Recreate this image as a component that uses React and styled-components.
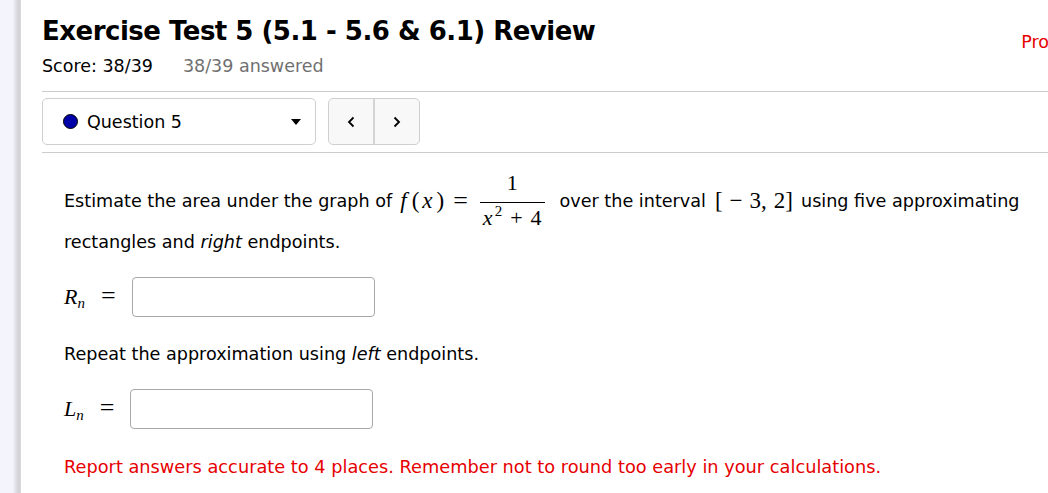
import styled, { createGlobalStyle } from "styled-components";

const GlobalStyle = createGlobalStyle`
  html, body {
    margin: 0;
    padding: 0;
    background: #fff;
    overflow: hidden;
  }
  body {
    font-family: "DejaVu Sans", "Liberation Sans", sans-serif;
    color: #000;
  }
`;

const Page = styled.div`
  display: flex;
  width: 1048px;
  height: 493px;
  overflow: hidden;
`;

const SideStrip = styled.div`
  flex: 0 0 21px;
  background: linear-gradient(
    to right,
    #f4f4fc 0,
    #f4f4fc 13px,
    #e4e4ea 15px,
    #cfcfd4 19px,
    #dcdce0 21px
  );
`;

const Main = styled.div`
  flex: 1;
  min-width: 0;
  padding-left: 21px;
`;

const Header = styled.div`
  display: flex;
  justify-content: space-between;
  align-items: flex-start;
  height: 36px;
  padding-top: 13px;
`;

const Title = styled.h1`
  margin: 0;
  font-size: 26px;
  font-weight: bold;
  line-height: 36px;
  letter-spacing: -0.5px;
  white-space: nowrap;
`;

const ProLink = styled.a`
  color: #e60000;
  font-size: 17.5px;
  line-height: 18px;
  margin-top: 20px;
  margin-right: -48px;
  text-decoration: none;
  white-space: nowrap;
`;

const ScoreRow = styled.div`
  display: flex;
  gap: 30px;
  font-size: 17.5px;
  line-height: 22px;
  margin-top: 6px;
`;

const Answered = styled.span`
  color: #707070;
`;

const Rule = styled.div`
  height: 1px;
  background: #cccccc;
  margin-top: ${(p) => p.top || 0}px;
`;

const NavRow = styled.div`
  display: flex;
  align-items: center;
  gap: 12px;
  margin-top: 6px;
`;

const Picker = styled.div`
  display: flex;
  align-items: center;
  width: 274px;
  height: 47px;
  box-sizing: border-box;
  border: 1px solid #cfcfcf;
  border-radius: 5px;
  padding: 0 14px 0 20px;
  font-size: 17.5px;
`;

const Dot = styled.span`
  width: 15px;
  height: 15px;
  border-radius: 50%;
  background: #0000a8;
  border: 1.5px solid #000;
  box-sizing: border-box;
  margin-right: 9px;
`;

const PickerLabel = styled.span`
  flex: 1;
`;

const Caret = styled.span`
  width: 0;
  height: 0;
  border-left: 5px solid transparent;
  border-right: 5px solid transparent;
  border-top: 6px solid #000;
`;

const ArrowGroup = styled.div`
  display: flex;
  width: 92px;
  height: 47px;
  border: 1px solid #cfcfcf;
  border-radius: 5px;
  background: #f8f8f8;
  box-sizing: border-box;
  overflow: hidden;
`;

const ArrowBtn = styled.button`
  flex: 1;
  border: none;
  background: transparent;
  display: flex;
  align-items: center;
  justify-content: center;
  padding: 0;
  & + & {
    border-left: 2px solid #d4d4d4;
  }
`;

const Body = styled.div`
  padding: 0 22px;
  font-size: 17.6px;
`;

const Para = styled.div`
  display: flex;
  align-items: center;
  white-space: nowrap;
  line-height: 22px;
  margin-top: ${(p) => p.top || 0}px;
`;

const Math = styled.span`
  font-family: "Liberation Serif", "DejaVu Serif", serif;
  font-size: ${(p) => p.size || 23}px;
  font-style: ${(p) => (p.italic ? "italic" : "normal")};
  margin: ${(p) => p.m || "0"};
  white-space: nowrap;
`;

const Frac = styled.span`
  display: inline-flex;
  flex-direction: column;
  align-items: stretch;
  margin: 0 15px 0 12px;
  font-family: "Liberation Serif", "DejaVu Serif", serif;
  font-size: 22px;
`;

const Num = styled.span`
  height: 24px;
  line-height: 24px;
  padding-bottom: 7px;
  text-align: center;
  border-bottom: 1px solid #000;
`;

const Den = styled.span`
  display: flex;
  justify-content: center;
  align-items: baseline;
  height: 24px;
  line-height: 24px;
  padding: 3px 3px 0;
  white-space: nowrap;
`;

const Sup = styled.span`
  font-size: 15px;
  line-height: 0;
  position: relative;
  top: -9px;
  margin-left: 2px;
`;

const Op = styled.span`
  margin: 0 ${(p) => p.gap || 5}px;
`;

const AnswerRow = styled.div`
  display: flex;
  align-items: center;
  height: 40px;
  margin-top: ${(p) => p.top || 0}px;
`;

const AnswerLabel = styled.span`
  display: inline-flex;
  align-items: baseline;
  width: ${(p) => p.w}px;
  font-family: "Liberation Serif", "DejaVu Serif", serif;
  font-size: 22px;
  line-height: 24px;
  i {
    font-style: italic;
  }
`;

const Sub = styled.i`
  font-size: 15px;
  position: relative;
  top: 4px;
`;

const Eq = styled.span`
  font-size: 26px;
  margin-left: ${(p) => p.gap}px;
`;

const AnswerInput = styled.input`
  width: 243px;
  height: 40px;
  box-sizing: border-box;
  border: 1px solid #a8a8a8;
  border-radius: 4px;
  outline: none;
`;

const Note = styled.div`
  color: #e60000;
  font-size: 17.75px;
  line-height: 22px;
  margin-top: 27px;
  white-space: nowrap;
`;

function Chevron({ dir }) {
  return (
    <svg width="10" height="14" viewBox="0 0 10 14">
      <path
        d={dir === "left" ? "M7.5 2.5 L3 7 L7.5 11.5" : "M2.5 2.5 L7 7 L2.5 11.5"}
        fill="none"
        stroke="#000"
        strokeWidth="1.8"
      />
    </svg>
  );
}

export default function App() {
  return (
    <>
      <GlobalStyle />
      <Page>
        <SideStrip />
        <Main>
          <Header>
            <Title>Exercise Test 5 (5.1 - 5.6 &amp; 6.1) Review</Title>
            <ProLink>Progress</ProLink>
          </Header>
          <ScoreRow>
            <span>Score: 38/39</span>
            <Answered>38/39 answered</Answered>
          </ScoreRow>
          <Rule top={14} />
          <NavRow>
            <Picker>
              <Dot />
              <PickerLabel>Question 5</PickerLabel>
              <Caret />
            </Picker>
            <ArrowGroup>
              <ArrowBtn>
                <Chevron dir="left" />
              </ArrowBtn>
              <ArrowBtn>
                <Chevron dir="right" />
              </ArrowBtn>
            </ArrowGroup>
          </NavRow>
          <Rule top={7} />
          <Body>
            <Para top={18}>
              <span>Estimate the area under the graph of</span>
              <Math italic m="0 0 0 8px">f</Math>
              <Math m="0 0 0 5px">(</Math>
              <Math italic m="0 0 0 3px">x</Math>
              <Math m="0 0 0 4px">)</Math>
              <Math size={26} m="0 0 0 9px">=</Math>
              <Frac>
                <Num>1</Num>
                <Den>
                  <i>x</i>
                  <Sup>2</Sup>
                  <Op gap={8}>+</Op>4
                </Den>
              </Frac>
              <span>over the interval</span>
              <Math m="0 0 0 9px">[</Math>
              <Math m="0 0 0 7px">−</Math>
              <Math m="0 0 0 7px">3,</Math>
              <Math m="0 0 0 7px">2]</Math>
              <span style={{ marginLeft: 8 }}>using five approximating</span>
            </Para>
            <Para top={1}>
              <span>
                rectangles and <i>right</i> endpoints.
              </span>
            </Para>
            <AnswerRow top={24}>
              <AnswerLabel w={68}>
                <i>R</i>
                <Sub>n</Sub>
                <Eq gap={16}>=</Eq>
              </AnswerLabel>
              <AnswerInput />
            </AnswerRow>
            <Para top={26}>
              <span>
                Repeat the approximation using <i>left</i> endpoints.
              </span>
            </Para>
            <AnswerRow top={24}>
              <AnswerLabel w={66}>
                <i>L</i>
                <Sub>n</Sub>
                <Eq gap={16}>=</Eq>
              </AnswerLabel>
              <AnswerInput />
            </AnswerRow>
            <Note>
              Report answers accurate to 4 places. Remember not to round too
              early in your calculations.
            </Note>
          </Body>
        </Main>
      </Page>
    </>
  );
}
